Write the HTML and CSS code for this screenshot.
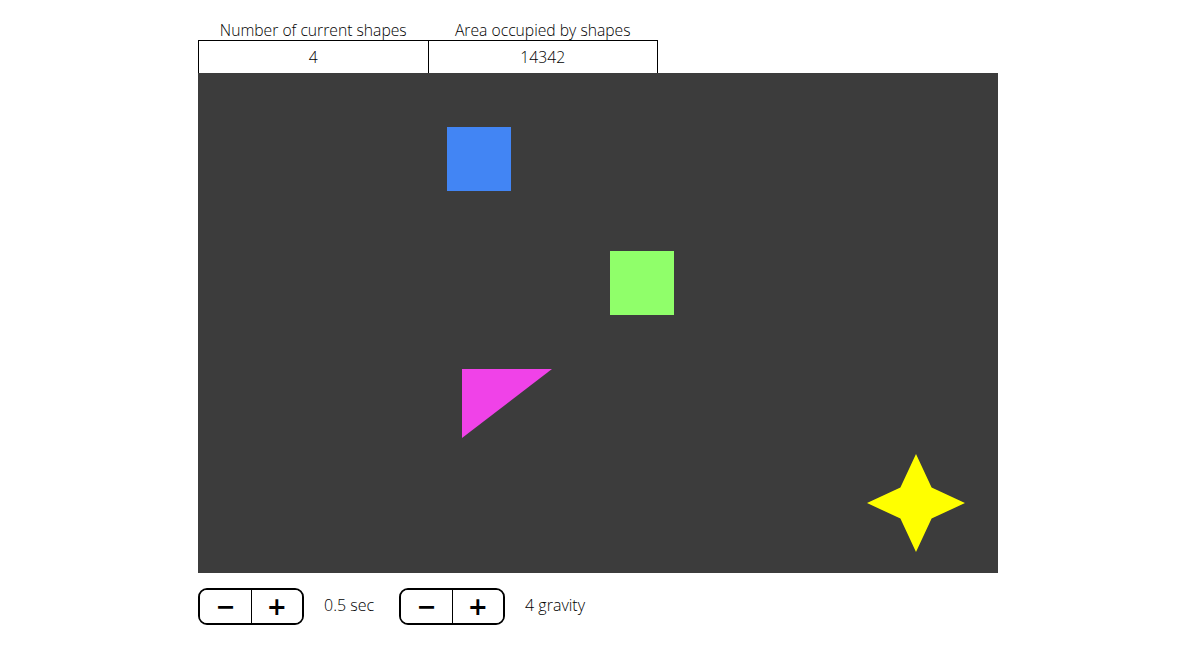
FILE: index.html
```html
<!DOCTYPE html>
<html>
<head>
<meta charset="utf-8">
<link rel="stylesheet" href="styles.css">
</head>
<body>
<div class="app">
  <table class="stats">
    <tr class="head">
      <th>Number of current shapes</th>
      <th>Area occupied by shapes</th>
    </tr>
    <tr class="vals">
      <td>4</td>
      <td>14342</td>
    </tr>
  </table>
  <div class="canvas">
    <svg width="800" height="500" viewBox="0 0 800 500">
      <rect x="249" y="54" width="64" height="64" fill="#4285f4"/>
      <rect x="412" y="178" width="64" height="64" fill="#90ff6a"/>
      <polygon points="264,296 354,296 264,365" fill="#f042e8"/>
      <polygon points="718,381 733.6,414.4 767,430 733.6,445.6 718,479 702.4,445.6 669,430 702.4,414.4" fill="#ffff00"/>
    </svg>
  </div>
  <div class="controls">
    <div class="stepper">
      <button class="btn">&minus;</button>
      <button class="btn">+</button>
    </div>
    <span class="label">0.5 sec</span>
    <div class="stepper">
      <button class="btn">&minus;</button>
      <button class="btn">+</button>
    </div>
    <span class="label">4 gravity</span>
  </div>
</div>
</body>
</html>
```
FILE: styles.css
```css
body {
  margin: 8px;
  background: #ffffff;
  font-family: "Open Sans", Lato, sans-serif;
  font-weight: 300;
  color: #000;
}
.app {
  margin-left: 190px;
  width: 800px;
}
.stats {
  border-collapse: collapse;
  margin-top: 12px;
  width: 460px;
  table-layout: fixed;
}
.stats th {
  font-weight: 300;
  font-size: 15.7px;
  line-height: 18px;
  height: 20px;
  padding: 0;
  text-align: center;
  vertical-align: middle;
}
.stats td {
  border: 1px solid #000;
  border-bottom: none;
  height: 32px;
  padding: 0;
  font-size: 15.7px;
  line-height: 20px;
  text-align: center;
  vertical-align: middle;
}
.canvas {
  width: 800px;
  height: 500px;
  background: #3c3c3c;
}
.canvas svg {
  display: block;
}
.controls {
  display: flex;
  align-items: center;
  margin-top: 15px;
}
.stepper {
  display: flex;
  width: 106px;
  height: 37px;
  box-sizing: border-box;
  border: 2px solid #000;
  border-radius: 9px;
  overflow: hidden;
}
.btn {
  flex: 1;
  background: #fff;
  border: none;
  padding: 0;
  margin: 0;
  font-family: "DejaVu Sans", sans-serif;
  font-size: 24px;
  font-weight: bold;
  color: #000;
  line-height: 1;
}
.btn + .btn {
  border-left: 1px solid #000;
}
.label {
  font-size: 16px;
  margin: 0 25px 0 20px;
  padding-bottom: 4px;
}
```
